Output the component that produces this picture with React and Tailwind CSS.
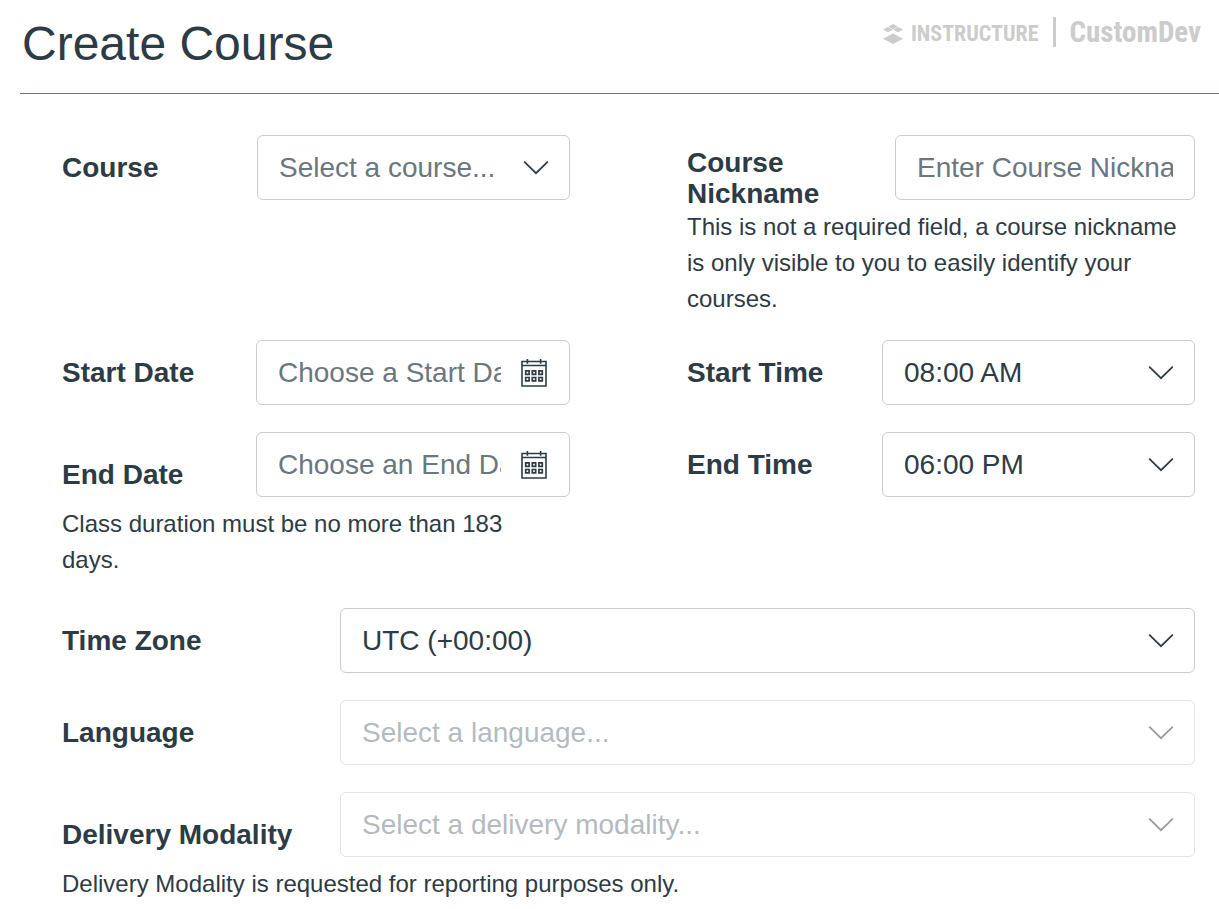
import React from "react";

const fieldBox =
  "h-[65px] w-full min-w-0 rounded-md border border-[#c7cdd1] bg-white text-[28px] text-[#2d3b45]";

function Chevron() {
  return (
    <svg
      aria-hidden="true"
      viewBox="0 0 26 14"
      className="pointer-events-none absolute top-1/2 right-[21px] h-3.5 w-[26px] -translate-y-1/2"
      fill="none"
      stroke="currentColor"
      strokeWidth="1.7"
    >
      <path d="M1.2 0.6L13 12.2L24.8 0.6" />
    </svg>
  );
}

function CalendarIcon() {
  return (
    <svg
      aria-hidden="true"
      viewBox="0 0 26 28"
      className="h-7 w-[26px]"
      fill="none"
      stroke="currentColor"
      strokeWidth="1.6"
    >
      <path d="M1 2.5H25V27H1ZM1 6.5H25M6.4 0V4.8M19.6 0V4.8" />
      <path
        strokeWidth="1.7"
        d="M4.7 11.9h3.4v3.4h-3.4zM11.3 11.9h3.4v3.4h-3.4zM17.9 11.9h3.4v3.4h-3.4zM4.7 18.5h3.4v3.4h-3.4zM11.3 18.5h3.4v3.4h-3.4zM17.9 18.5h3.4v3.4h-3.4z"
      />
    </svg>
  );
}

function Label({ htmlFor, lowered, children }) {
  return (
    <label
      htmlFor={htmlFor}
      className={`text-[28px] leading-[31px] font-bold ${lowered ? "pt-5" : ""}`}
    >
      {children}
    </label>
  );
}

function Select({ id, options, placeholder, disabled }) {
  return (
    <div className={`relative ${disabled ? "opacity-50" : ""}`}>
      <select
        id={id}
        disabled={disabled}
        defaultValue={placeholder ? "" : options[0]}
        className={`${fieldBox} appearance-none pr-14 pl-[21px] leading-[40px] ${placeholder ? "text-[#6b7780]" : ""}`}
      >
        {placeholder && <option value="">{placeholder}</option>}
        {options.map((option) => (
          <option key={option}>{option}</option>
        ))}
      </select>
      <Chevron />
    </div>
  );
}

function DateInput({ id, placeholder, buttonLabel }) {
  return (
    <div className={`${fieldBox} flex items-center gap-5 pr-[22px] pl-[21px]`}>
      <input
        id={id}
        type="text"
        placeholder={placeholder}
        className="min-w-0 flex-1 bg-transparent outline-none placeholder:text-[#6b7780]"
      />
      <button type="button" aria-label={buttonLabel}>
        <CalendarIcon />
      </button>
    </div>
  );
}

function Help({ children }) {
  return <p className="pr-3 text-[24px] leading-[36px]">{children}</p>;
}

function Brand() {
  return (
    <div className="-mt-0.5 flex items-center font-['Roboto_Condensed','Roboto',sans-serif] leading-8 font-bold text-[#cccccc]">
      <svg aria-hidden="true" viewBox="0 0 20 20" className="mt-1 mr-2 h-5 w-5" fill="currentColor">
        <path d="M10 0L14.8 2.6L10 5.2L5.2 2.6ZM5 3L10 5.7L5 8.3L0 5.6ZM15 3L20 5.6L15 8.3L10 5.7ZM10 9.6L20 14.7L10 20L0 14.7Z" />
      </svg>
      <span className="pt-1 text-[22px]">INSTRUCTURE</span>
      <span className="mx-3.5 h-[30px] w-[3px] bg-[#cccccc]" />
      <span className="text-[29px]">CustomDev</span>
    </div>
  );
}

export default function App() {
  return (
    <main className="font-['Liberation_Sans',Arial,sans-serif] text-[#2d3b45]">
      <header className="ml-5 flex items-start justify-between border-b border-[#6b7780] pt-4 pr-[18px] pb-[22px]">
        <h1 className="pl-0.5 text-[48px] leading-[55px]">Create Course</h1>
        <Brand />
      </header>

      <form className="flex flex-col gap-[27px] pt-[41px] pr-6 pl-[62px]">
        <div className="-mb-1 grid grid-cols-2 gap-x-[117px]">
          <div className="grid grid-cols-[195px_1fr] items-center self-start">
            <Label htmlFor="course">Course</Label>
            <Select id="course" placeholder="Select a course..." options={["Course 101"]} />
          </div>
          <div>
            <div className="grid grid-cols-[208px_1fr] items-start">
              <div className="flex pt-3">
                <Label htmlFor="nickname">Course Nickname</Label>
              </div>
              <input
                id="nickname"
                type="text"
                placeholder="Enter Course Nickname"
                className={`${fieldBox} px-[21px] placeholder:text-[#6b7780]`}
              />
            </div>
            <Help>This is not a required field, a course nickname is only visible to you to easily identify your courses.</Help>
          </div>
        </div>

        <div className="grid grid-cols-2 gap-x-[117px]">
          <div className="grid grid-cols-[194px_1fr] items-center">
            <Label htmlFor="start-date">Start Date</Label>
            <DateInput id="start-date" placeholder="Choose a Start Date" buttonLabel="Open start date calendar" />
          </div>
          <div className="grid grid-cols-[195px_1fr] items-center">
            <Label htmlFor="start-time">Start Time</Label>
            <Select id="start-time" options={["08:00 AM", "09:00 AM", "10:00 AM"]} />
          </div>
        </div>

        <div className="mb-[3px] grid grid-cols-2 gap-x-[117px]">
          <div className="flex flex-col gap-[9px]">
            <div className="grid grid-cols-[194px_1fr] items-center">
              <Label htmlFor="end-date" lowered>End Date</Label>
              <DateInput id="end-date" placeholder="Choose an End Date" buttonLabel="Open end date calendar" />
            </div>
            <Help>Class duration must be no more than 183 days.</Help>
          </div>
          <div className="grid grid-cols-[195px_1fr] items-center self-start">
            <Label htmlFor="end-time">End Time</Label>
            <Select id="end-time" options={["06:00 PM", "07:00 PM", "08:00 PM"]} />
          </div>
        </div>

        <div className="grid grid-cols-[278px_1fr] items-center">
          <Label htmlFor="time-zone">Time Zone</Label>
          <Select id="time-zone" options={["UTC (+00:00)"]} />
        </div>

        <div className="grid grid-cols-[278px_1fr] items-center">
          <Label htmlFor="language">Language</Label>
          <Select id="language" placeholder="Select a language..." options={[]} disabled />
        </div>

        <div className="flex flex-col gap-[9px]">
          <div className="grid grid-cols-[278px_1fr] items-center">
            <Label htmlFor="modality" lowered>Delivery Modality</Label>
            <Select id="modality" placeholder="Select a delivery modality..." options={[]} disabled />
          </div>
          <Help>Delivery Modality is requested for reporting purposes only.</Help>
        </div>
      </form>
    </main>
  );
}
